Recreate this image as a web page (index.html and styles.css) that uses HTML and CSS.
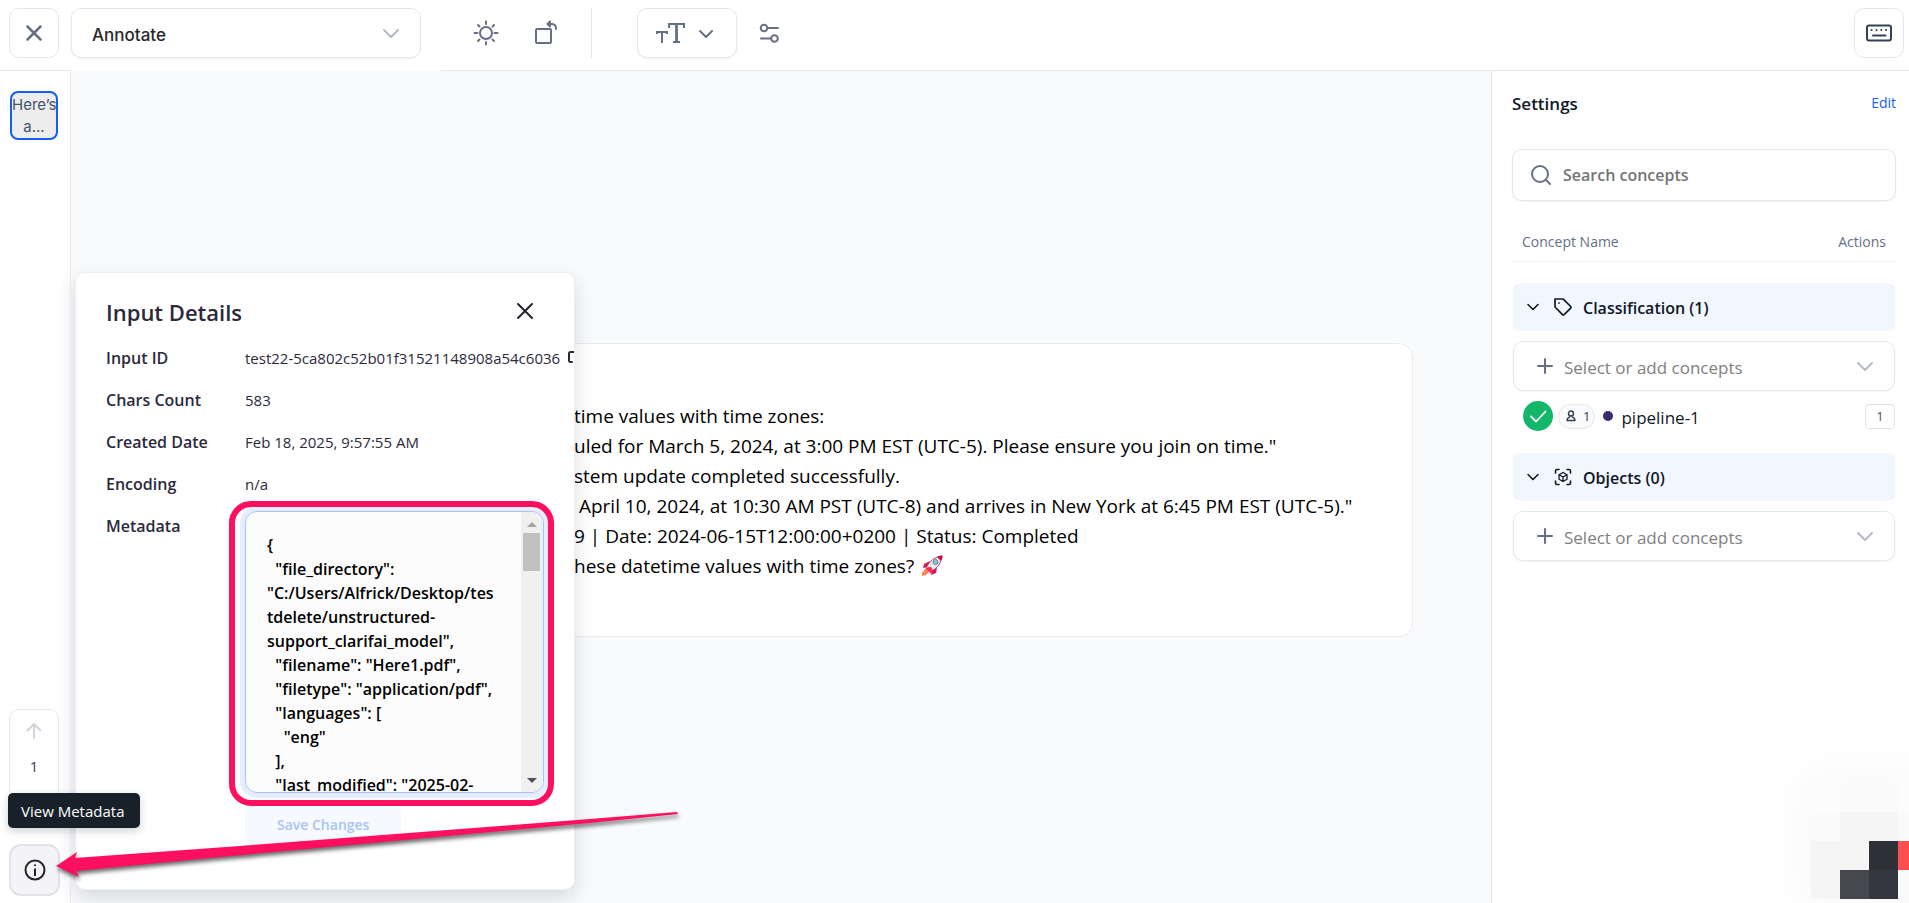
FILE: index.html
```html
<!DOCTYPE html>
<html lang="en">
<head>
<meta charset="utf-8">
<meta name="viewport" content="width=device-width, initial-scale=1">
<title>Annotate</title>
<link rel="stylesheet" href="styles.css">
</head>
<body>
<div class="app">
  <header class="topbar">
    <button class="square-btn" type="button" aria-label="Close">
      <svg class="icon" width="24" height="24" viewBox="0 0 24 24" stroke-width="2.500"><path d="M5.500 5.500l13 13M18.500 5.500l-13 13"/></svg>
    </button>
    <div class="mode">
      <select class="mode-select" aria-label="Mode"><option>Annotate</option></select>
      <svg class="icon chevron" width="24" height="24" viewBox="0 0 24 24" stroke-width="2"><path d="M5 9l7 7 7-7"/></svg>
    </div>
    <div class="tools">
      <button class="plain-btn" type="button" aria-label="Brightness">
        <svg class="icon" width="28" height="28" viewBox="0 0 28 28" stroke-width="2"><circle cx="14" cy="14" r="6"/><path d="M14 2.500v2.500M14 23v2.500M2.500 14h3M22.500 14h3M6 6l1.500 1.500M20.500 20.500l1.500 1.500M6 22l1.500-1.500M20.500 7.500l1.500-1.500"/></svg>
      </button>
      <button class="plain-btn" type="button" aria-label="Rotate">
        <svg class="icon" width="28" height="28" viewBox="0 0 28 28" stroke-width="2"><rect x="4" y="10" width="15" height="14" rx="1"/><path d="M16 5h4q4 0 4 5"/><path d="M18 2.500L15.500 5 18 7.500z" fill="currentColor"/></svg>
      </button>
    </div>
    <span class="divider"></span>
    <div class="text-tools">
      <button class="type-btn" type="button" aria-label="Text size">
        <svg class="icon type-icon" width="30" height="26" viewBox="0 0 30 26" stroke-width="2"><path d="M2 14v-2h10v2M7 12v11"/><path d="M14 8V4h15v4M18 22h7"/><path d="M21.500 4v18" stroke-width="2.800"/></svg>
        <svg class="icon" width="20" height="20" viewBox="0 0 20 20" stroke-width="2"><path d="M4 8l6 6 6-6"/></svg>
      </button>
      <button class="plain-btn" type="button" aria-label="Display settings">
        <svg class="icon" width="24" height="24" viewBox="0 0 24 24" stroke-width="2"><circle cx="7" cy="7" r="3.300"/><path d="M10.500 7H21"/><circle cx="17.500" cy="17.500" r="3.300"/><path d="M4 17.500h10"/></svg>
      </button>
    </div>
    <button class="square-btn keyboard" type="button" aria-label="Keyboard shortcuts">
      <svg class="icon" width="28" height="20" viewBox="0 0 28 20" stroke-width="2"><rect x="2" y="2.500" width="24" height="15" rx="2"/><path d="M6.500 7h.1M11.500 7h.1M16.200 7h.1M21 7h.1M8 12.500h12.500"/></svg>
    </button>
  </header>

  <div class="workspace">
    <nav class="rail">
      <button class="thumb" type="button">Here’s a...</button>
      <div class="rail-bottom">
        <div class="pager">
          <svg class="icon" width="20" height="20" viewBox="0 0 20 20" stroke-width="2"><path d="M10 17V3M3.500 9.500L10 3l6.500 6.500"/></svg>
          <span>1</span>
        </div>
        <button class="info-btn" type="button" aria-describedby="meta-tip" aria-label="Input details">
          <svg class="icon" width="24" height="24" viewBox="0 0 24 24" stroke-width="2"><circle cx="12" cy="12" r="9.500"/><path d="M12 10.500V18M12 6.500V8" stroke-linecap="butt"/></svg>
        </button>
      </div>
      <div class="tooltip" id="meta-tip" role="tooltip">View Metadata</div>
    </nav>

    <main class="canvas">
      <article class="document">
        <p>time values with time zones:</p>
        <p>uled for March 5, 2024, at 3:00 PM EST (UTC-5). Please ensure you join on time."</p>
        <p>stem update completed successfully.</p>
        <p>&nbsp;April 10, 2024, at 10:30 AM PST (UTC-8) and arrives in New York at 6:45 PM EST (UTC-5)."</p>
        <p>9 | Date: 2024-06-15T12:00:00+0200 | Status: Completed</p>
        <p>hese datetime values with time zones?
          <svg class="rocket" width="21" height="21" viewBox="0 0 21 21" role="img" aria-label="rocket"><path d="M4 13L0 18v3l4-1 4-4z" fill="#ff8257"/><path d="M8 6L2 9l-1 4 5-1zM15 13l-1 5-5 2 1-5z" fill="#d41a52"/><path d="M4 13Q9 2 20 1q-1 11-12 16z" fill="#e8e8ee" stroke="#b62450" stroke-width=".8"/><path d="M15 2q3-2 5.500-1.500Q21 3 19 6z" fill="#c01048"/><circle cx="13.500" cy="7" r="2.600" fill="#8ebbe0" stroke="#6d7894" stroke-width=".8"/><path d="M4 13q5-2 6 0t-1 6z" fill="#ff2b5f"/></svg></p>
      </article>
    </main>

    <section class="panel" aria-labelledby="panel-title">
      <div class="panel-head">
        <h2 id="panel-title">Input Details</h2>
        <button class="panel-close" type="button" aria-label="Close details">
          <svg class="icon" width="24" height="24" viewBox="0 0 24 24" stroke-width="2"><path d="M5 5l14 14M19 5L5 19"/></svg>
        </button>
      </div>
      <div class="field"><span class="name">Input ID</span><span class="value">test22-5ca802c52b01f31521148908a54c6036<svg class="icon" width="16" height="16" viewBox="0 0 16 16" stroke-width="2"><path d="M5 12H3.500Q2 12 2 10.500v-7Q2 2 3.500 2h6Q11 2 11 3.500V5"/></svg></span></div>
      <div class="field"><span class="name">Chars Count</span><span class="value">583</span></div>
      <div class="field"><span class="name">Created Date</span><span class="value">Feb 18, 2025, 9:57:55 AM</span></div>
      <div class="field"><span class="name">Encoding</span><span class="value">n/a</span></div>
      <div class="field meta">
        <label class="name" for="metadata">Metadata</label>
        <div class="meta-body">
          <div class="editor">
            <textarea id="metadata" spellcheck="false">{
  "file_directory": "C:/Users/Alfrick/Desktop/testdelete/unstructured-support_clarifai_model",
  "filename": "Here1.pdf",
  "filetype": "application/pdf",
  "languages": [
    "eng"
  ],
  "last_modified": "2025-02-</textarea>
            <div class="scrollbar" aria-hidden="true">
              <svg width="10" height="5" viewBox="0 0 10 5"><path d="M0 5l5-5 5 5z" fill="#a3a3a3"/></svg>
              <span class="scroll-thumb"></span>
              <svg width="10" height="5" viewBox="0 0 10 5"><path d="M0 0l5 5 5-5z" fill="#505050"/></svg>
            </div>
            <span class="highlight"></span>
          </div>
          <button class="save-btn" type="button" disabled>Save Changes</button>
        </div>
      </div>
    </section>

    <aside class="settings">
      <div class="settings-head"><h1>Settings</h1><a href="#edit">Edit</a></div>
      <div class="search">
        <svg class="icon" width="24" height="24" viewBox="0 0 24 24" stroke-width="2"><circle cx="11" cy="11" r="8"/><path d="M17 17l4 4"/></svg>
        <input type="text" placeholder="Search concepts" aria-label="Search concepts">
      </div>
      <div class="columns"><span>Concept Name</span><span>Actions</span></div>

      <div class="group">
        <button class="group-head" type="button">
          <svg class="icon" width="14" height="14" viewBox="0 0 14 14" stroke-width="1.600"><path d="M2 4.500l5 5 5-5"/></svg>
          <svg class="icon" width="20" height="20" viewBox="0 0 20 20" stroke-width="1.700"><path d="M2 2v7.500q0 .5.500 1l7 7.200q.8.700 1.600 0l6.600-6.600q.8-.8 0-1.600L10.500 2.300Q10.200 2 9.700 2z"/><path d="M6 6h.1"/></svg>
          <span>Classification (1)</span>
        </button>
        <div class="picker">
          <svg class="icon plus" width="20" height="20" viewBox="0 0 20 20" stroke-width="2"><path d="M3 10h14M10 3v14"/></svg>
          <select aria-label="Classification concepts"><option>Select or add concepts</option></select>
          <svg class="icon chevron" width="24" height="24" viewBox="0 0 24 24" stroke-width="2"><path d="M5 9l7 7 7-7"/></svg>
        </div>
        <div class="concept">
          <span class="check"><svg class="icon" width="20" height="20" viewBox="0 0 20 20" stroke-width="1.800"><path d="M3 10.500l5 5L17.500 5.500"/></svg></span>
          <span class="people"><svg class="icon" width="12" height="12" viewBox="0 0 12 12" stroke-width="1.400"><circle cx="6" cy="3.500" r="2.500"/><path d="M4.800 6.800Q2 8 2 10.500h8Q10 8 7.200 6.800"/></svg>1</span>
          <span class="dot"></span>
          <span class="concept-name">pipeline-1</span>
          <span class="key">1</span>
        </div>
      </div>

      <div class="group">
        <button class="group-head" type="button">
          <svg class="icon" width="14" height="14" viewBox="0 0 14 14" stroke-width="1.600"><path d="M2 4.500l5 5 5-5"/></svg>
          <svg class="icon" width="20" height="20" viewBox="0 0 20 20" stroke-width="1.600"><path d="M2.500 6V4q0-1.500 1.500-1.500h2M14 2.500h2q1.500 0 1.500 1.500v2M17.500 14v2q0 1.500-1.500 1.500h-2M6 17.500H4q-1.500 0-1.500-1.500v-2"/><path d="M10 5.500l4 2.200v4.600l-4 2.200-4-2.200V7.700zM6 7.700l4 2.300 4-2.300M10 10v4.500" stroke-width="1.300"/></svg>
          <span>Objects (0)</span>
        </button>
        <div class="picker">
          <svg class="icon plus" width="20" height="20" viewBox="0 0 20 20" stroke-width="2"><path d="M3 10h14M10 3v14"/></svg>
          <select aria-label="Object concepts"><option>Select or add concepts</option></select>
          <svg class="icon chevron" width="24" height="24" viewBox="0 0 24 24" stroke-width="2"><path d="M5 9l7 7 7-7"/></svg>
        </div>
      </div>
    </aside>
  </div>

  <svg class="arrow" width="640" height="84" viewBox="0 0 640 84" aria-hidden="true"><path d="M6 55L27 41 25 47 190 35 540 8 627 1 628 3 540 12 170 46 26 60 29 66z" fill="#ff0f5f"/></svg>

  <div class="mosaic" aria-hidden="true">
    <i class="t1"></i><i class="t2"></i><i class="t2"></i><i class="t1"></i>
    <i class="t2"></i><i class="t3"></i><i class="t3"></i><i class="t2"></i>
    <i class="t3"></i><i class="t3"></i><i class="dark"></i><i class="red"></i>
    <i class="t3"></i><i class="grey"></i><i class="slate"></i><i class="t2"></i>
  </div>
</div>
</body>
</html>
```
FILE: styles.css
```css
* { box-sizing: border-box; }
body {
  margin: 0;
  background: #fff;
  color: #101828;
  font-family: "Open Sans", "Noto Sans", sans-serif;
  font-size: 15px;
}
button, select, input, textarea { font: inherit; color: inherit; }
button { cursor: pointer; }
h1, h2, p { margin: 0; }
.icon {
  display: block;
  flex: none;
  fill: none;
  stroke: currentColor;
  stroke-linecap: round;
  stroke-linejoin: round;
}
.type-icon { stroke-linecap: butt; stroke-linejoin: miter; }
.app {
  position: relative;
  display: flex;
  flex-direction: column;
  height: 100vh;
  overflow: hidden;
}

/* Top bar */
.topbar {
  display: flex;
  align-items: center;
  flex: none;
  height: 71px;
  padding: 8px 5px 12px 9px;
  border-bottom: 1px solid #e4e7ec;
  color: #667085;
}
.square-btn {
  display: grid;
  place-items: center;
  width: 50px;
  height: 50px;
  padding: 0;
  background: #fff;
  border: 1px solid #e4e7ec;
  border-radius: 10px;
}
.keyboard { margin-left: auto; color: #344054; }
.mode {
  position: relative;
  width: 350px;
  margin-left: 12px;
}
.mode-select {
  display: block;
  width: 100%;
  height: 50px;
  padding: 4px 20px 0;
  appearance: none;
  background: #fff;
  border: 1px solid #e4e7ec;
  border-radius: 10px;
  box-shadow: 0 1px 2px #1018280d;
  color: #272727;
  font-family: Inter, sans-serif;
  font-size: 17px;
  font-weight: 500;
}
/* the strip below the mode picker has no rule */
.mode::after {
  content: "";
  position: absolute;
  top: 61px;
  left: 0;
  width: 370px;
  height: 2px;
  background: #fff;
}
.chevron {
  position: absolute;
  right: 18px;
  top: 13px;
  color: #b4bac6;
  pointer-events: none;
}
.tools { display: flex; gap: 32px; margin-left: 51px; }
.plain-btn {
  display: grid;
  place-items: center;
  padding: 0;
  background: none;
  border: 0;
}
.divider { width: 1px; height: 50px; margin-left: 31px; background: #e4e7ec; }
.text-tools { display: flex; align-items: center; gap: 20px; margin-left: 45px; }
.type-btn {
  display: flex;
  align-items: center;
  gap: 11px;
  width: 100px;
  height: 50px;
  padding: 0 17px;
  background: #fff;
  border: 1px solid #e4e7ec;
  border-radius: 10px;
  box-shadow: 0 1px 2px #1018280d;
}

/* Workspace */
.workspace { position: relative; display: flex; flex: 1; min-height: 0; }
.rail {
  position: relative;
  z-index: 3;
  display: flex;
  flex-direction: column;
  justify-content: space-between;
  flex: none;
  width: 71px;
  padding: 20px 10px 7px 9px;
  border-right: 1px solid #e4e7ec;
}
.thumb {
  width: 48px;
  height: 49px;
  margin-left: 1px;
  padding: 0;
  background: #ededed;
  border: 2px solid #155eef;
  border-radius: 8px;
  color: #475467;
  font-family: Inter, sans-serif;
  font-size: 15px;
  line-height: 22px;
}
.rail-bottom { display: flex; flex-direction: column; gap: 25px; }
.pager {
  display: flex;
  flex-direction: column;
  align-items: center;
  gap: 15px;
  width: 50px;
  height: 110px;
  padding-top: 11px;
  border: 1px solid #e4e7ec;
  border-radius: 10px;
  color: #344054;
  line-height: 20px;
}
.pager .icon { color: #d0d5dd; }
.info-btn {
  display: grid;
  place-items: center;
  width: 51px;
  height: 52px;
  padding: 0;
  background: #f3f3f8;
  border: 2px solid #e2e2e8;
  border-radius: 12px;
  color: #23232f;
}
.tooltip {
  position: absolute;
  left: 8px;
  bottom: 75px;
  padding: 8px 16px 7px 13px;
  background: #182029;
  border-radius: 5px;
  box-shadow: 0 3px 8px #10182833;
  color: #fff;
  font-size: 15px;
  line-height: 20px;
  white-space: nowrap;
}
.canvas {
  display: flex;
  flex-direction: column;
  justify-content: center;
  flex: 1;
  min-width: 0;
  padding: 5px 78px 0 79px;
  background: #f9fafc;
}
.document {
  padding: 57px 48px 55px 423px;
  background: #fff;
  border: 1px solid #eaecf0;
  border-radius: 14px;
  color: #000;
  font-size: 19px;
  line-height: 30px;
  white-space: nowrap;
}
.rocket { margin-left: 3px; vertical-align: -3px; }

/* Input details */
.panel {
  position: absolute;
  left: 75px;
  bottom: 13px;
  z-index: 2;
  width: 500px;
  padding: 21px 30px 44px;
  overflow: hidden;
  background: #fff;
  border: 1px solid #eceef1;
  border-radius: 10px;
  color: #2b2a3d;
  box-shadow: 0 8px 20px #10182826;
}
.panel-head { display: flex; justify-content: space-between; align-items: flex-start; padding-right: 7px; }
.panel-head h2 { font-size: 22px; font-weight: 600; line-height: 36px; }
.panel-close { margin-top: 5px; padding: 0; background: none; border: 0; color: #23232f; }
.field { display: flex; padding: 4px 0; line-height: 34px; }
.panel-head + .field { margin-top: 7px; }
.name { flex: none; width: 139px; font-size: 16px; font-weight: 600; }
.value { display: flex; align-items: center; gap: 7px; white-space: nowrap; }
.meta { padding-bottom: 0; }
.meta-body { flex: 1; padding-top: 2px; }
.editor {
  position: relative;
  display: flex;
  height: 282px;
  background: #fcfcfc;
  border: 1px solid #a9c2fb;
  border-radius: 12px;
  box-shadow: 0 0 0 5px #e6edfc;
}
.editor textarea {
  flex: 1;
  min-width: 0;
  padding: 21px 22px 0 21px;
  overflow: hidden;
  resize: none;
  background: none;
  border: 0;
  outline: 0;
  color: #000;
  font-size: 16px;
  font-weight: 600;
  line-height: 24px;
  white-space: pre-wrap;
  overflow-wrap: anywhere;
}
.scrollbar {
  display: flex;
  flex-direction: column;
  align-items: center;
  width: 22px;
  padding: 10px 1px 9px 0;
  background: #f0f0f0;
  border-radius: 0 12px 12px 0;
}
.scroll-thumb { width: 17px; height: 38px; margin: 6px 0 auto; background: #c1c1c1; }
.highlight {
  position: absolute;
  inset: -11px -11px -14px -17px;
  border: 6px solid #ff0f5f;
  border-radius: 22px;
  pointer-events: none;
}
.save-btn {
  display: block;
  height: 40px;
  margin-top: 12px;
  padding: 0 31px;
  background: #f6faff;
  border: 1px solid #f2f6fd;
  border-radius: 8px;
  color: #a9c2fb;
  font-size: 14px;
  font-weight: 600;
}

/* Settings */
.settings {
  flex: none;
  width: 418px;
  padding: 19px 13px 0 20px;
  border-left: 1px solid #e4e7ec;
  background: #fff;
}
.settings-head { display: flex; justify-content: space-between; line-height: 28px; }
.settings h1 { font-size: 17px; font-weight: 600; }
.settings a { color: #155eef; text-decoration: none; font-size: 14px; line-height: 26px; }
.search {
  display: flex;
  align-items: center;
  gap: 10px;
  height: 52px;
  margin-top: 31px;
  padding: 0 16px;
  border: 1px solid #e4e7ec;
  border-radius: 10px;
  box-shadow: 0 1px 2px #1018280d;
  color: #667085;
}
.search input { flex: 1; min-width: 0; padding: 0; border: 0; outline: 0; font-size: 16px; font-weight: 600; }
.search input::placeholder { color: #757575; }
.columns {
  display: flex;
  justify-content: space-between;
  margin-top: 23px;
  padding: 5px 10px 7px;
  border-bottom: 1px solid #f2f4f7;
  color: #667085;
  font-size: 14px;
  line-height: 25px;
}
.group { margin: 21px 1px 0; }
.group-head {
  display: flex;
  align-items: center;
  width: 100%;
  height: 48px;
  padding: 0 13px;
  background: #f1f6ff;
  border: 0;
  border-radius: 5px;
  font-size: 16px;
  font-weight: 600;
  line-height: 24px;
}
.group-head svg + svg { margin: 0 10px 0 13px; }
.group-head span { padding-top: 2px; }
.picker { position: relative; margin-top: 10px; }
.plus { position: absolute; left: 22px; top: 15px; color: #667085; pointer-events: none; }
.picker select {
  display: block;
  width: 100%;
  height: 50px;
  padding: 2px 50px 0 50px;
  appearance: none;
  background: #fff;
  border: 1px solid #e4e7ec;
  border-radius: 10px;
  box-shadow: 0 1px 2px #1018280d;
  color: #808080;
  font-size: 17px;
}
.concept { display: flex; align-items: center; padding: 10px 0 1px 10px; }
.check {
  display: grid;
  place-items: center;
  width: 30px;
  height: 30px;
  background: #12b76a;
  border-radius: 50%;
  color: #fff;
}
.people {
  display: flex;
  align-items: center;
  gap: 6px;
  height: 25px;
  margin-left: 5px;
  padding: 0 4px 0 6px;
  background: #f9fafb;
  border: 1px solid #e4e7ec;
  border-radius: 13px;
  color: #344054;
  font-size: 13px;
}
.dot { width: 10px; height: 10px; margin: 0 8px; background: #3b2a6d; border-radius: 50%; }
.concept-name { padding-top: 4px; font-size: 17px; line-height: 26px; }
.key {
  margin-left: auto;
  width: 30px;
  height: 25px;
  border: 1px solid #dfe3e9;
  border-radius: 4px;
  color: #475467;
  font-size: 13px;
  line-height: 23px;
  text-align: center;
}

/* Callout arrow and corner mosaic float over the page */
.arrow {
  position: absolute;
  left: 50px;
  bottom: 8px;
  z-index: 4;
  filter: drop-shadow(1px 3px 2px #0009);
  pointer-events: none;
}
.mosaic {
  position: absolute;
  right: -18px;
  bottom: 4px;
  display: grid;
  grid-template-columns: repeat(4, 29px);
  grid-auto-rows: 29px;
  box-shadow: 0 0 50px 10px #00000008;
}
.t1 { background: #fcfcfc; }
.t2 { background: #fafafa; }
.t3 { background: #f5f5f5; }
.dark { background: #2e3138; }
.slate { background: #34373f; }
.grey { background: #47484d; }
.red { background: #ff4d50; }
```
